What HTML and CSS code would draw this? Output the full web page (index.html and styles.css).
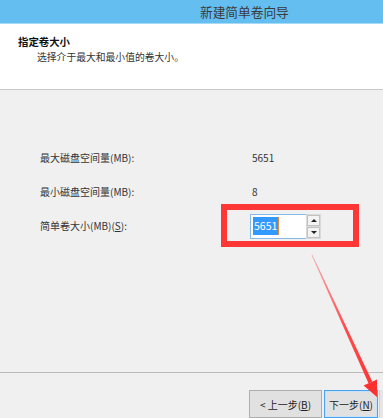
FILE: index.html
```html
<!DOCTYPE html>
<html lang="zh-CN">
<head>
    <meta charset="UTF-8">
    <title>新建简单卷向导</title>
    <link rel="stylesheet" href="styles.css">
</head>
<body>
    <div class="window">
        <div class="titlebar">新建简单卷向导</div>

        <div class="header">
            <div class="header-title">指定卷大小</div>
            <div class="header-desc">选择介于最大和最小值的卷大小。</div>
        </div>

        <div class="content">
            <div class="form">
                <div class="label">最大磁盘空间量(MB):</div>
                <div class="value">5651</div>

                <div class="label">最小磁盘空间量(MB):</div>
                <div class="value">8</div>

                <div class="label">简单卷大小(MB)(<u>S</u>):</div>
                <div class="spin">
                    <div class="spin-input"><span class="selected">5651</span><span class="caret"></span></div>
                    <div class="spin-buttons">
                        <div class="spin-btn"><span class="tri-up"></span></div>
                        <div class="spin-btn"><span class="tri-down"></span></div>
                    </div>
                </div>
            </div>
        </div>

        <div class="footer">
            <button class="btn">&lt; 上一步(<u>B</u>)</button>
            <button class="btn btn-default">下一步(<u>N</u>)</button>
            <div class="btn-edge"></div>
        </div>

        <!-- 标注：红框和箭头 -->
        <div class="mark-box"></div>
        <svg class="mark-arrow" width="383" height="418" viewBox="0 0 383 418">
            <defs>
                <linearGradient id="fade" x1="312" y1="255" x2="377" y2="397" gradientUnits="userSpaceOnUse">
                    <stop offset="0" stop-color="#ff3b3b" stop-opacity="0.35"/>
                    <stop offset="0.5" stop-color="#ff3b3b" stop-opacity="0.9"/>
                    <stop offset="1" stop-color="#ff3030"/>
                </linearGradient>
            </defs>
            <polygon points="312.4,254.8 311.6,255.2 368.6,383.4 372.2,381.6" fill="url(#fade)"/>
            <polygon points="377,397 363.6,385.6 377,379.4" fill="#ff3030"/>
        </svg>
    </div>
</body>
</html>
```

FILE: styles.css
```css
body {
    margin: 0;
    font-family: "Noto Sans CJK SC", "Liberation Sans", sans-serif;
    font-size: 10px;
    color: #333;
    background-color: #f0f0f0;
}
.window {
    position: relative;
    width: 383px;
    height: 418px;
    overflow: hidden;
    display: flex;
    flex-direction: column;
}
.titlebar {
    height: 23px;
    line-height: 24px;
    padding-left: 200px;
    font-size: 12.7px;
    color: #3a3a3a;
    background-color: #64bff0;
    border-bottom: 1px solid #a6dbf7;
}
.header {
    height: 65px;
    padding-left: 18px;
    background-color: white;
    border-bottom: 1px solid #c9c9c9;
}
.header-title {
    margin-top: 10px;
    font-size: 10.4px;
    font-weight: bold;
    line-height: 16px;
    color: #111;
}
.header-desc {
    padding-left: 19px;
    font-size: 9.8px;
    line-height: 15px;
    color: #333;
}
.content {
    height: 284px;
    padding: 56px 0 0 40px;
    box-sizing: border-box;
    border-bottom: 1px solid #bdbdbd;
}
.form {
    display: grid;
    grid-template-columns: 210px auto;
    grid-auto-rows: 25px;
    row-gap: 9px;
    align-items: center;
}
.label, .value {
    line-height: 14px;
}
.value {
    padding-left: 2px;
}
.spin {
    display: flex;
    height: 25px;
}
.spin-input {
    width: 53px;
    height: 23px;
    display: flex;
    align-items: center;
    padding-left: 2px;
    background-color: white;
    border: 1px solid #86b9ea;
    border-right: none;
}
.selected {
    background-color: #3399ff;
    color: white;
    font-size: 10.5px;
    line-height: 18px;
    padding: 0 1px;
}
.caret {
    width: 1px;
    height: 18px;
    background-color: #e08a3a;
}
.spin-buttons {
    width: 15px;
    display: flex;
    flex-direction: column;
    gap: 1px;
    padding: 1px;
    box-sizing: border-box;
    background-color: #d9d9d9;
}
.spin-btn {
    flex: 1;
    display: flex;
    align-items: center;
    justify-content: center;
    background-color: #f3f3f3;
    border: 1px solid #c2c2c2;
}
.tri-up, .tri-down {
    width: 0;
    height: 0;
    border-left: 3px solid transparent;
    border-right: 3px solid transparent;
}
.tri-up {
    border-bottom: 3px solid #222;
}
.tri-down {
    border-top: 3px solid #222;
}
.footer {
    flex: 1;
    display: flex;
    gap: 2px;
    padding: 17px 0 0 249px;
}
.btn {
    flex: none;
    width: 73px;
    height: 28px;
    padding: 0;
    font-family: inherit;
    font-size: 10px;
    color: #222;
    background-color: #e1e1e1;
    border: 1px solid #adadad;
}
.btn-default {
    width: 54px;
    border: 1px solid #4aa3f0;
    box-shadow: inset 0 0 0 1px #c8e2fa;
}
.btn-edge {
    flex: none;
    width: 10px;
    height: 28px;
    margin-left: -1px;
    background-color: #e6e6e6;
    border-left: 1px solid #d0d0d0;
}
.mark-box {
    position: absolute;
    left: 221px;
    top: 204px;
    width: 126px;
    height: 31px;
    border: 6px solid #ff3636;
}
.mark-arrow {
    position: absolute;
    left: 0;
    top: 0;
    pointer-events: none;
}
```
